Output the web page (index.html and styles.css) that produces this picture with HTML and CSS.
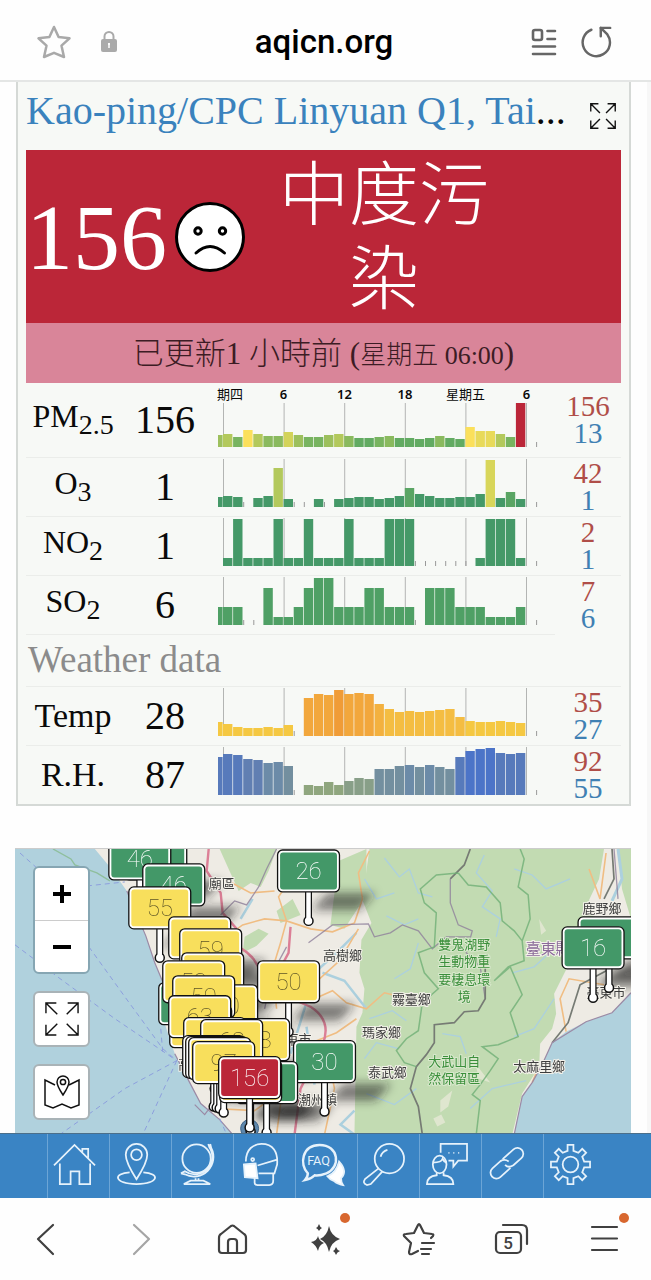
FILE: index.html
```html
<!DOCTYPE html>
<html lang="zh-Hant">
<head>
  <meta charset="UTF-8">
  <meta name="viewport" content="width=device-width, initial-scale=1.0">
  <title>Kao-ping/CPC Linyuan Q1, Taiwan</title>
  <link rel="stylesheet" href="styles.css">
</head>
<body>
  <header class="address-bar">
    <button class="icon-btn" aria-label="Bookmark">
      <svg width="36" height="36" viewBox="0 0 36 36" fill="none" stroke="#a9a9a9" stroke-width="2.500" stroke-linejoin="round"><path d="M18 3 L22.600 13 L33.500 14.300 L25.500 21.700 L28 33 L18 28.800 L8 33 L10.500 21.700 L2.500 14.300 L13.400 13 Z"/></svg>
    </button>
    <svg class="lock" width="18" height="24" viewBox="0 0 18 24"><path d="M4.500 10 V6.500 a4.500 4.500 0 0 1 9 0 V10" fill="none" stroke="#aaa" stroke-width="2"/><rect x="1" y="9" width="16" height="13" rx="2" fill="#aaa"/><path d="M9 13 v5 M8 14 h2" stroke="#fff" stroke-width="1.500"/></svg>
    <span class="site">aqicn.org</span>
    <button class="icon-btn reader" aria-label="Reader view">
      <svg width="28" height="30" viewBox="0 0 28 30" fill="none" stroke="#666" stroke-width="2.600" stroke-linecap="round"><rect x="3" y="3" width="9" height="10" rx="2"/><path d="M17.500 4 H25 M17.500 12 H25 M3 19.500 H25 M3 27 H25"/></svg>
    </button>
    <button class="icon-btn" aria-label="Reload">
      <svg width="32" height="36" viewBox="0 0 34 36" fill="none" stroke="#666" stroke-width="2.600" stroke-linecap="round" stroke-linejoin="round"><path d="M11 5 A14.500 14.500 0 1 0 28 10 L21 3"/><path d="M31 3 H21 V12"/></svg>
    </button>
  </header>

  <main class="content">
    <section class="card">
      <div class="title-row">
        <h1><a href="#">Kao-ping/CPC Linyuan Q1, Tai</a>...</h1>
        <button class="icon-btn" aria-label="Expand">
          <svg width="26" height="26" viewBox="0 0 34 34" fill="none" stroke="#111" stroke-width="1.800"><path d="M13 13 L1 1 M1 11 V1 H11 M21 13 L33 1 M23 1 H33 V11 M13 21 L1 33 M1 23 V33 H11 M21 21 L33 33 M23 33 H33 V23"/></svg>
        </button>
      </div>
      <div class="aqi">
        <span class="aqi-value">156</span>
        <svg class="face" width="70" height="70" viewBox="0 0 70 70" fill="none" stroke="#000" stroke-width="3"><circle cx="35" cy="35" r="33.500" fill="#fff"/><circle cx="23" cy="29" r="3.200"/><circle cx="47.500" cy="29" r="3.200"/><path d="M21 51 Q35 38 49.500 51" stroke-linecap="round"/></svg>
        <span class="aqi-level">中度污染</span>
      </div>
      <p class="updated">已更新1 小時前 (<small>星期五 06:00</small>)</p>

      <table class="readings">
        <tbody>
          <tr class="first">
            <th class="gas" scope="row">PM<sub>2.5</sub></th>
            <td class="value">156</td>
            <td class="chart">
              <div class="hours"><span>期四</span><b>6</b><b>12</b><b>18</b><span>星期五</span><b>6</b></div>
              <svg class="bars" data-series="pm25"></svg>
            </td>
            <td class="range"><span class="max">156</span><span class="min">13</span></td>
          </tr>
          <tr>
            <th class="gas" scope="row">O<sub>3</sub></th>
            <td class="value">1</td>
            <td class="chart"><svg class="bars" data-series="o3"></svg></td>
            <td class="range"><span class="max">42</span><span class="min">1</span></td>
          </tr>
          <tr>
            <th class="gas" scope="row">NO<sub>2</sub></th>
            <td class="value">1</td>
            <td class="chart"><svg class="bars" data-series="no2"></svg></td>
            <td class="range"><span class="max">2</span><span class="min">1</span></td>
          </tr>
          <tr class="last-gas">
            <th class="gas" scope="row">SO<sub>2</sub></th>
            <td class="value">6</td>
            <td class="chart"><svg class="bars" data-series="so2"></svg></td>
            <td class="range"><span class="max">7</span><span class="min">6</span></td>
          </tr>
          <tr class="heading">
            <th colspan="4" scope="rowgroup">Weather data</th>
          </tr>
          <tr>
            <th scope="row">Temp</th>
            <td class="value">28</td>
            <td class="chart"><svg class="bars" data-series="temp"></svg></td>
            <td class="range"><span class="max">35</span><span class="min">27</span></td>
          </tr>
          <tr>
            <th scope="row">R.H.</th>
            <td class="value">87</td>
            <td class="chart"><svg class="bars" data-series="rh"></svg></td>
            <td class="range"><span class="max">92</span><span class="min">55</span></td>
          </tr>
        </tbody>
      </table>
    </section>

    <section class="map">
      <svg class="map-canvas" viewBox="0 0 617 286">
        <defs>
          <filter id="blur" x="-30%" y="-60%" width="160%" height="220%"><feGaussianBlur stdDeviation="5"/></filter>
        </defs>
        <!-- sea and land -->
        <rect width="617" height="286" fill="#b0d1dd"/>
        <path fill="#eeebe4" d="M80 0 L95 18 L112 42 L131 87 L140 114 L150 138 L150 175 L160 205 L175 234 L186 255 L205 271 L218 286 H500 L508 248 L518 234 L527 218 L538 194 L552 183 L572 173 L598 164 L617 144 V0 Z"/>
        <path fill="#c2dbb2" d="M355 0 L348 51 L357 74 L347 91 L345 124 L350 140 L348 164 L342 178 L340 286 H498 L508 245 L525 218 L526 195 L538 180 L542 165 L540 145 L555 115 L572 98 L580 70 L575 51 L585 30 L590 0 Z"/>
        <path fill="#c2dbb2" d="M205 0 H262 L254 22 L246 38 L236 34 L224 42 L214 20 Z M324 12 L352 0 V46 L330 80 L316 76 Z M230 88 l14 -8 l10 5 l-12 12 l-14 7 Z M262 62 l16 -12 l8 16 l-20 8 Z M604 0 H617 V70 L608 40 Z"/>
        <path fill="#dfe6cf" d="M426 252 l12 -10 l-4 16 l-8 6 Z M525 70 l7 12 l-5 4 Z M419 270 l8 -4 l4 8 l-8 4 Z M462 216 l14 18 l-12 -4 Z"/>
        <!-- rivers -->
        <g fill="none" stroke="#acd0de" stroke-width="1.300">
          <path d="M370 9 L385 28 L395 20 L404 44 L418 48 M372 67 L390 76 L404 70 M470 6 L462 24 L478 42 L468 58 L486 70 L482 88 M500 20 L518 26 L532 40 L556 30 M380 130 L396 120 L404 94 M355 170 L378 162 L392 172 M428 185 L446 188 L452 205 M456 260 L478 240 L512 232 M352 245 L380 256 L402 240 M350 30 L362 50 L380 44 M540 100 L520 118 L498 124 M350 210 L362 194 L384 200 M540 150 L520 180 L500 188"/>
          <path stroke-width="3" d="M604 0 L608 30 L598 52"/>
          <path stroke-width="2.500" d="M342 84 L322 104 L300 124 L290 160 L276 205 M308 124 L330 132 L352 160 M340 286 L326 276 L340 262 M238 50 L226 70 M292 178 L300 236"/>
        </g>
        <!-- roads -->
        <g fill="none" stroke="#f0bd83" stroke-width="1.600">
          <path d="M355 2 L344 24 L348 50 L340 74 L318 83 L296 80 L272 72 L250 70 L228 76 L206 92 M272 72 L266 94 L258 120 L262 160 M272 72 L264 48 L276 30 M305 130 L325 112 L344 80 M300 150 L318 142 L332 154 L352 160 L370 144 L378 146 M230 180 L260 200 L268 240 L262 286 M292 196 L322 184 L342 170 M310 286 L320 240 L314 210 M200 260 L240 262 L262 246 M552 183 L546 150 L555 130 L590 136 M575 20 L586 50 L592 4 M518 234 L524 220 M210 30 L236 44 L260 42"/>
          <path stroke="#dc7f96" stroke-width="2.400" d="M194 0 L192 22 L206 44 L208 64 L222 80 M220 96 Q250 110 246 140 L272 148 L296 158 Q318 172 308 196 L300 210 M276 78 L274 104 L260 130 M280 286 L286 240 L296 220"/>
        </g>
        <g fill="none" stroke="#8e7f9b" stroke-width="1.300" opacity=".8">
          <path d="M262 0 L252 20 L244 38 L232 56 L220 52 L206 66 M294 94 L318 76 L354 75 L360 88 L376 84 L388 76 L404 82 L418 100 L432 88 L456 88 M436 30 L436 54 L444 76 L458 82 L452 104 L466 118 L471 150 M604 50 L600 0 M272 98 L258 124 L250 160"/>
        </g>
        <path fill="none" stroke="#767b74" stroke-width="1.700" d="M456 0 L450 16 L436 30 M471 118 V150 L464 162 L450 163 L440 174 L420 176 L420 194 L412 206 L402 218 L396 240 L404 258 L408 286 M596 120 L566 136 L554 174 L538 194 M598 0 L600 30 L590 50"/>
        <path fill="none" stroke="#6faf76" stroke-width="1.500" opacity=".8" d="M444 24 L422 26 L406 40 L410 54 L422 64 L420 98 L404 104 L410 124 L424 140 L408 154 L404 182 L392 190 L382 202 L390 214 L402 218 M444 24 L454 36 L472 38 L486 54 L488 72 L500 82 L508 92 L516 70 L514 46 L504 38 L510 10 L506 0 M508 92 L510 112 L494 118 L480 132 L496 118 L508 146 L496 164 L504 188 L484 196 L468 198 L484 210 L476 222 L466 236 L458 246 L466 252 L462 286"/>
        <path fill="none" stroke="#9b8aa5" stroke-width="1.200" d="M112 42 L131 87 L140 114 L150 138 M160 205 L175 234 L186 255 L205 271 L218 286 M180 256 L190 266 L196 258 M500 286 L508 248 L518 234 L527 218 L538 194 L572 173 L598 164 L617 144"/>
        <path fill="none" stroke="#8fbf9d" stroke-width="1.400" d="M38 0 L56 10 L60 16 L82 24 L95 32"/>
        <g fill="none" stroke="#8d9fdd" stroke-width="1" stroke-dasharray="5 4">
          <path d="M5 4 L32 28 M72 37 L110 33 M0 96 L48 132 L100 170 L162 212 M74 98 L110 148 L148 200 L162 212 L110 240 L45 286 M162 212 L140 260 L128 286 M146 180 L148 204 M205 270 L212 286"/>
        </g>
        <g id="shadows" filter="url(#blur)"></g>
        <!-- place names -->
        <g class="places">
          <text x="207" y="39">廟區</text>
          <text x="328" y="111">高樹鄉</text>
          <text x="397" y="155">霧臺鄉</text>
          <text x="367" y="188">瑪家鄉</text>
          <text x="373" y="228">泰武鄉</text>
          <text x="525" y="222">太麻里鄉</text>
          <text x="588" y="64">鹿野鄉</text>
          <text x="592" y="148">臺東市</text>
          <text x="284" y="195">東市</text>
          <text x="303" y="255">潮州鎮</text>
          <text x="170" y="220">高</text>
          <text class="county" x="534" y="105">臺東縣</text>
          <text class="reserve" x="450" y="100">雙鬼湖野</text>
          <text class="reserve" x="450" y="117">生動物重</text>
          <text class="reserve" x="450" y="135">要棲息環</text>
          <text class="reserve" x="450" y="152">境</text>
          <text class="reserve" x="440" y="217">大武山自</text>
          <text class="reserve" x="440" y="234">然保留區</text>
        </g>
        <circle cx="235" cy="280" r="9" fill="#5d87ac" stroke="#3b6188"/>
        <g id="pins"></g>
      </svg>
      <div class="map-controls">
        <div class="zoom">
          <button aria-label="Zoom in"><svg width="18" height="18" viewBox="0 0 18 18" stroke="#000" stroke-width="4"><path d="M0 9 H18 M9 0 V18"/></svg></button>
          <button aria-label="Zoom out"><svg width="18" height="18" viewBox="0 0 18 18" stroke="#000" stroke-width="4"><path d="M0 9 H18"/></svg></button>
        </div>
        <button class="tool" aria-label="Full screen"><svg width="34" height="34" viewBox="0 0 36 36" fill="none" stroke="#111" stroke-width="1.500"><path d="M13 13 L1 1 M1 12 V1 H12 M23 13 L35 1 M24 1 H35 V12 M13 23 L1 35 M1 24 V35 H12 M23 23 L35 35 M24 35 H35 V24"/></svg></button>
        <button class="tool" aria-label="Nearest station"><svg width="36" height="36" viewBox="0 0 36 36" fill="none" stroke="#111" stroke-width="1.500"><path d="M11 11 L1 6 V31 L9 34 L18 30 L27 34 L35 31 V6 L25 11"/><path d="M19 21 Q13 12 13 8 a6 6 0 0 1 12 0 Q25 12 19 21 Z"/><circle cx="19" cy="8" r="2.600"/></svg></button>
      </div>
    </section>
  </main>

  <nav class="site-nav">
    <a href="#" aria-label="Home"><svg viewBox="0 0 44 44"><path d="M1 23 L22 2 L43 23 M30 9 V6 H36 V15 M7 21 V42 H18 V29 H27 V42 H38 V21"/></svg></a>
    <a href="#" aria-label="Here"><svg viewBox="0 0 44 44"><path d="M22 37 Q11 20 11 12 a11 11 0 0 1 22 0 Q33 20 22 37 Z"/><circle cx="22" cy="12" r="5.500"/><path d="M15 30 C-2 31 -2 41 22 42 C46 41 46 31 29 30"/></svg></a>
    <a href="#" aria-label="World"><svg viewBox="0 0 44 44"><circle cx="20" cy="16" r="14.500"/><path d="M32 1 L33 4 A18 18 0 0 1 8 29 L4 31 M34 1 L35 5 A20 20 0 0 1 8 32 L4 31"/><path d="M19 36 V39 M22 36 V39 M14 38.500 H27 L34 42 H7 Z"/></svg></a>
    <a href="#" aria-label="Masks"><svg viewBox="0 0 44 44"><path d="M7 19 C7 6 15 1 23 1 C35 1 40 9 39 22 L36 32 M16 35 V41 Q16 43 19 43 H31 Q35 43 35 39 V31 H20 M19 23 L39 17"/><circle cx="14" cy="17" r="1.500"/><path fill="#fff" d="M5 22 L17 21 L19 36 L6 35 Z"/></svg></a>
    <a href="#" aria-label="FAQ"><svg viewBox="0 0 44 44"><path fill="#fff" d="M27 34 Q36 31 39 19 Q48 29 41 36 Q41 40 43 43 Q37 42 34 39 Q30 38 27 34 Z"/><path fill="#3a84c4" stroke-width="2.500" d="M7 31 C-2 22 1 2 19 2 C39 2 41 25 26 31 Q18 34 14 33 Q10 37 4 38 Q7 35 7 31 Z"/><text x="18" y="23">FAQ</text></svg></a>
    <a href="#" aria-label="Search"><svg viewBox="0 0 44 44"><circle cx="27" cy="16" r="15"/><path d="M18 14 A10 10 0 0 1 25 7 M16 26 L2 37 Q-1 41 4 43 L8 42 L20 29"/></svg></a>
    <a href="#" aria-label="Contact"><svg viewBox="0 0 44 44"><path d="M16 10 V1 H43 V18 H34 L29 24 V18 H24"/><path d="M24 10 h1 M29 10 h1 M34 10 h1"/><ellipse cx="15" cy="22" rx="7" ry="9"/><path d="M8 20 Q17 20 18 16 Q19 19 22 20 M12 30 V33 Q2 34 2 42 H29 Q29 34 19 33 V30"/></svg></a>
    <a href="#" aria-label="Links"><svg viewBox="0 0 44 44"><g transform="rotate(-42 20 21)"><path d="M20 27 H6 a6 6 0 0 1 0 -12 H17 Q22 16 23 21"/><path d="M20 15 H35 a6 6 0 0 1 0 12 H24 Q18 26 18 21"/></g></svg></a>
    <a href="#" aria-label="Settings"><svg viewBox="0 0 44 44"><path d="M19 2 H25 V8 L30 10 L34 6 L38 10 L34 14 L36 19 H42 V25 H36 L34 30 L38 34 L34 38 L30 34 L25 36 V42 H19 V36 L14 34 L10 38 L6 34 L10 30 L8 25 H2 V19 H8 L10 14 L6 10 L10 6 L14 10 L19 8 Z"/><circle cx="22" cy="22" r="8"/></svg></a>
  </nav>

  <footer class="browser-bar">
    <button aria-label="Back"><svg viewBox="0 0 36 36"><path d="M24 4 L9 18 L24 33"/></svg></button>
    <button class="off" aria-label="Forward"><svg viewBox="0 0 36 36"><path d="M12 4 L27 18 L12 33"/></svg></button>
    <button aria-label="Home page"><svg viewBox="0 0 36 36"><path d="M16 5 L6 13 Q4 14 4 17 V29 Q4 32 7 32 H28 Q31 32 31 29 V17 Q31 14 29 13 L19 5 Q17.500 4 16 5 Z M13 32 V21 Q13 18 16 18 H19 Q22 18 22 21 V32"/></svg></button>
    <button class="has-dot" aria-label="Assistant"><svg class="solid" viewBox="0 0 36 36"><path d="M21 5 Q23 15 32 18 Q23 21 21 31 Q19 21 12 18 Q19 15 21 5 Z M10 15 Q11 20 16 22 Q11 24 10 30 Q8 24 3 21 Q9 20 10 15 Z M11 3 Q12 6 14 7 Q12 8 11 10 Q10 8 8 7 Q10 6 11 3 Z M28 26 Q29 29 32 30 Q29 31 28 34 Q27 31 25 30 Q27 29 28 26 Z"/></svg></button>
    <button aria-label="Bookmarks"><svg viewBox="0 0 36 36"><path d="M17 30 L11 33 Q8 34 8 31 L10 22 L3 15 Q2 13 5 13 L13 12 L17 4 Q18 2 19 4 L23 12 L31 13 Q33 13 32 15 L30 17 M21 22 H33 M20 28 H30 M21 33 H28"/></svg></button>
    <button aria-label="Tabs"><svg viewBox="0 0 36 36"><rect x="2" y="11" width="25" height="21" rx="4"/><path d="M9 4 H28 Q33 4 33 9 V23"/><text x="14" y="28">5</text></svg></button>
    <button class="has-dot" aria-label="Menu"><svg viewBox="0 0 36 36"><path d="M5 6 H30 M5 17.500 H30 M5 29 H30"/></svg></button>
  </footer>

  <script src="script.js"></script>
</body>
</html>
```
FILE: styles.css
```css
* {
  box-sizing: border-box;
}
body {
  margin: 0;
  height: 100vh;
  display: flex;
  flex-direction: column;
  background: #fefefe;
  color: #0a0a0a;
  font-family: "Liberation Serif", "Noto Sans CJK TC", serif;
}
button {
  margin: 0;
  padding: 0;
  border: 0;
  background: none;
  cursor: pointer;
}
svg {
  display: block;
}

/* browser address bar */
.address-bar {
  flex: none;
  height: 82px;
  padding: 4px 38px 0 36px;
  display: flex;
  align-items: center;
  border-bottom: 2px solid #e4e6e5;
}
.lock {
  margin-left: 28px;
}
.site {
  flex: 1;
  padding-bottom: 2px;
  text-align: center;
  font: 500 33px Roboto, sans-serif;
  color: #000;
}
.reader {
  margin-right: 23px;
}

.content {
  flex: 1;
  min-height: 0;
  overflow: hidden;
  border-right: 4px solid #f7f7f7;
  padding: 0 16px;
}
.card {
  background: #f7f9f6;
  border: 2px solid #d5d9d6;
  border-top: 0;
  padding: 0 8px;
}
.title-row {
  height: 68px;
  display: flex;
  align-items: center;
  justify-content: space-between;
  padding-right: 5px;
}
h1 {
  margin: 0;
  padding-bottom: 10px;
  font-size: 40px;
  line-height: 48px;
  font-weight: normal;
  white-space: nowrap;
}
h1 a {
  color: #3a82bd;
  text-decoration: none;
}

.aqi {
  display: flex;
  align-items: center;
  background: #bb2638;
  color: #fff;
}
.aqi-value {
  font-size: 94px;
  line-height: 94px;
}
.face {
  margin-left: 8px;
}
.aqi-level {
  width: 3em;
  margin-left: 34px;
  padding-top: 5px;
  font-size: 70px;
  line-height: 84px;
  font-weight: 300;
  text-align: center;
}
.updated {
  margin: 0;
  height: 60px;
  background: #d98599;
  color: #3c1c24;
  font-size: 31px;
  font-weight: 300;
  line-height: 62px;
  text-align: center;
}
.updated small {
  font-size: 26px;
  line-height: 1;
}

/* readings table */
.readings {
  width: 100%;
  table-layout: fixed;
  border-collapse: collapse;
}
.readings tr {
  height: 59px;
}
.readings tr.first {
  height: 74px;
}
.readings tr.heading {
  height: 52px;
}
.readings th,
.readings td {
  padding: 0;
  border-bottom: 1px solid #ebedea;
  text-align: center;
}
.readings tr:last-child th,
.readings tr:last-child td,
.readings .last-gas .range {
  border-bottom: 0;
}
.readings th {
  width: 94px;
  font-size: 34px;
  line-height: 36px;
  font-weight: normal;
}
.readings .gas {
  padding-bottom: 8px;
  font-size: 32px;
}
.readings sub {
  font-size: 28px;
  line-height: 0;
  vertical-align: -7px;
}
.readings .heading th {
  padding-left: 2px;
  font-size: 37px;
  color: #8b8b8b;
  text-align: left;
}
.readings .value {
  width: 90px;
  font-size: 40px;
}
.readings .chart {
  padding: 1px 0 0 8px;
  vertical-align: top;
}
.hours {
  width: 320px;
  height: 19px;
  display: grid;
  grid-template-columns: 36px 61px 61px 60px 61px 61px;
  margin-left: -1px;
  font: 13px/20px "Noto Sans", "Noto Sans CJK TC", sans-serif;
  text-align: center;
}
.hours span:first-child {
  text-align: left;
}
.hours b {
  font-weight: 600;
}
.range {
  width: 66px;
  font-size: 29px;
  line-height: 27px;
}
.range span {
  display: block;
}
.max {
  color: #b04e48;
}
.min {
  color: #3f80b3;
}

/* map */
.map {
  position: relative;
  margin: 42px 0 0 -1px;
  border-top: 1px solid #ccc;
}
.map-canvas {
  width: 100%;
}
.places text {
  font: 13px "Noto Sans CJK TC", sans-serif;
  text-anchor: middle;
  fill: #3d3d3d;
  stroke: #f3f1ea;
  stroke-width: 2px;
  paint-order: stroke;
}
.places .reserve {
  fill: #3b8f3b;
  stroke: #d8e8cc;
}
.places .county {
  font-size: 15px;
  fill: #8a6a99;
}
.pin-label {
  font: 100 24px Roboto, sans-serif;
  text-anchor: middle;
}
.map-controls {
  position: absolute;
  top: 17px;
  left: 18px;
  display: grid;
  gap: 17px;
}
.zoom,
.tool {
  width: 57px;
  border: 2px solid #a9b3b7;
  border-radius: 6px;
  background: #fff;
}
.zoom {
  border-color: #86a6b3;
}
.zoom button {
  width: 100%;
  height: 52px;
  display: grid;
  place-items: center;
}
.zoom button + button {
  border-top: 1px solid #ccc;
}
.tool {
  height: 56px;
  display: grid;
  place-items: center;
}

/* site icon bar */
.site-nav {
  flex: none;
  height: 65px;
  display: flex;
  justify-content: center;
  background: #3a84c4;
  border-top: 1px solid #4c6f8a;
}
.site-nav a {
  width: 62px;
  padding: 9px 5px;
  border-left: 1px solid #6ca5d6;
}
.site-nav svg {
  width: 43px;
  height: 43px;
  overflow: visible;
  fill: none;
  stroke: #e6f2fb;
  stroke-width: 1.8;
}
.site-nav text {
  font: 13px Roboto, sans-serif;
  text-anchor: middle;
  fill: #e6f2fb;
  stroke: none;
}

/* browser bottom bar */
.browser-bar {
  flex: none;
  height: 82px;
  display: flex;
  align-items: center;
}
.browser-bar button {
  position: relative;
  flex: 1;
  height: 62px;
  display: grid;
  place-items: center;
}
.browser-bar svg {
  width: 36px;
  height: 36px;
  overflow: visible;
  fill: none;
  stroke: #404040;
  stroke-width: 2.2;
  stroke-linecap: round;
  stroke-linejoin: round;
}
.browser-bar .off svg {
  stroke: #a5a5a5;
}
.browser-bar .solid {
  fill: #404040;
  stroke: none;
}
.browser-bar text {
  font: 500 17px Roboto, sans-serif;
  text-anchor: middle;
  fill: #404040;
  stroke: none;
}
.has-dot::after {
  content: "";
  position: absolute;
  top: 5px;
  left: 61px;
  width: 10px;
  height: 10px;
  border-radius: 50%;
  background: #d8672f;
}
```
FILE: script.js
```js
const NS = "http://www.w3.org/2000/svg";

function add(parent, tag, attrs, text) {
  const el = document.createElementNS(NS, tag);
  for (const key in attrs) el.setAttribute(key, attrs[key]);
  if (text) el.textContent = text;
  parent.appendChild(el);
  return el;
}

// pick the colour of the last stop not above the value
function scale(stops) {
  return v => stops.filter(s => v >= s[0]).pop()[1];
}

// hourly values, null where the station sent nothing
const _ = null;
const series = {
  pm25: {
    height: 44,
    data: [12,13,10,17,13,11,11,15,12,10,10,12,13,11,9,9,10,11,9,9,8,9,11,9,8,20,16,16,13,10,44],
    color: scale([[0, "#62ab62"], [10, "#78b460"], [11, "#8aba5e"], [12, "#9dc05d"], [13, "#b3c95c"], [15, "#d3d35a"], [16, "#e8da5a"], [17, "#fbe05b"], [40, "#bb2638"]])
  },
  o3: {
    height: 48,
    data: [10,11,10,_,9,11,39,8,_,_,8,_,8,9,10,10,8,9,11,19,13,11,9,9,10,10,13,47,9,15,8],
    color: scale([[0, "#459968"], [15, "#5aa564"], [30, "#b3c95c"], [45, "#d8d65a"]])
  },
  no2: {
    height: 48,
    data: [_,8,47,8,8,8,47,8,8,47,8,8,8,47,8,8,8,47,47,47,_,_,_,_,_,_,8,47,47,47,8],
    color: scale([[0, "#459968"]])
  },
  so2: {
    height: 48,
    data: [18,18,18,_,_,37,8,8,18,37,47,47,18,18,18,37,37,18,18,18,_,37,37,37,18,18,18,8,8,8,18],
    color: scale([[0, "#4fa065"]])
  },
  temp: {
    height: 48,
    data: [14,12,9,8,8,9,8,11,_,38,42,41,46,42,43,42,32,27,24,25,24,25,26,27,19,15,14,14,15,14,13],
    color: scale([[0, "#f5c842"], [18, "#f4bd42"], [30, "#f3b13f"], [38, "#f2a73c"], [46, "#f09c37"]])
  },
  rh: {
    height: 48,
    data: [38,41,40,36,35,32,33,29,_,10,9,13,10,14,17,16,26,26,29,30,28,30,28,26,38,44,46,47,42,41,42],
    color: scale([[0, "#8fa67e"], [14, "#889f88"], [24, "#738f9f"], [30, "#6c8ba8"], [35, "#617fb2"], [38, "#577abb"], [44, "#4c74c8"]])
  }
};

const START = 5;
const STEP = 10.1;

document.querySelectorAll(".bars").forEach(svg => {
  const { height, data, color } = series[svg.dataset.series];
  svg.setAttribute("width", 320);
  svg.setAttribute("height", height);

  for (let h = 0; h <= 30; h += 6) {
    add(svg, "rect", { x: START + h * STEP, y: 0, width: 1, height: height, fill: "#b3b5b3" });
  }
  data.forEach((v, i) => {
    const x = i ? START + (i - 1) * STEP : 0;
    if (v === null) {
      if (i) add(svg, "rect", { x: x, y: height - 5, width: 1, height: 5, fill: "#999" });
      return;
    }
    add(svg, "rect", { x: x, y: height - v, width: i ? STEP - 0.7 : 4.6, height: v, fill: color(v) });
  });
  add(svg, "rect", { x: START + 31 * STEP, y: height - 5, width: 1, height: 5, fill: "#999" });
});

// stations: x, y, colour, label
const green = "#439868", yellow = "#f8df5c", red = "#bb2638";
const stations = [
  [110, -11, green, ""],
  [94, -11, green, "46"],
  [263, 1, green, "26"],
  [128, 15, green, "46"],
  [114, 38, yellow, "55"],
  [154, 68, yellow, ""],
  [564, 68, green, ""],
  [548, 78, green, "16"],
  [165, 80, yellow, "59"],
  [167, 104, yellow, ""],
  [144, 134, green, ""],
  [181, 136, yellow, "50"],
  [148, 112, yellow, "52"],
  [243, 112, yellow, "50"],
  [158, 127, yellow, "59"],
  [155, 157, yellow, ""],
  [154, 147, yellow, "63"],
  [213, 170, yellow, "68"],
  [169, 169, yellow, ""],
  [186, 171, yellow, "68"],
  [168, 187, yellow, ""],
  [171, 188, yellow, ""],
  [174, 189, yellow, ""],
  [279, 192, green, "30"],
  [178, 193, yellow, "97"],
  [221, 213, green, ""],
  [205, 212, yellow, ""],
  [204, 208, red, "156"]
];
const shadows = document.getElementById("shadows");
const pins = document.getElementById("pins");

stations.forEach(([x, y, fill, label]) => {
  add(shadows, "path", { d: `M${x + 34} ${y + 60} l16 -17 h48 l-16 17 Z`, fill: "#222", opacity: 0.55 });

  const cx = x + 31;
  add(pins, "path", { d: `M${cx} ${y + 42} V${y + 70}`, stroke: "#111", "stroke-width": 7 });
  add(pins, "circle", { cx: cx, cy: y + 71, r: 4.5, fill: "#fff", stroke: "#111", "stroke-width": 1.5 });
  add(pins, "path", { d: `M${cx} ${y + 42} V${y + 71}`, stroke: "#fff", "stroke-width": 4.5 });
  add(pins, "rect", { x: x, y: y, width: 62, height: 42, rx: 5, fill: "#fff", stroke: "#111", "stroke-width": 1.3 });
  add(pins, "rect", { x: x + 2.5, y: y + 2.5, width: 57, height: 37, rx: 3, fill: fill });
  add(pins, "text", { class: "pin-label", x: cx, y: y + 29, fill: fill === yellow ? "#5c5426" : "#fff" }, label);
});
```
